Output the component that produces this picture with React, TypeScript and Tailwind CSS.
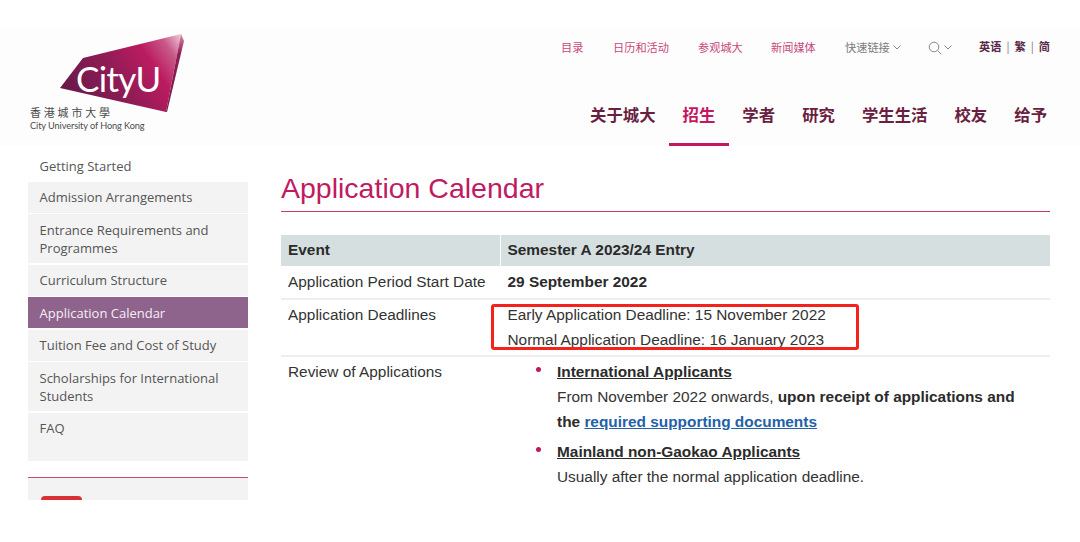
import React from "react";

const CJK = "font-['Noto_Sans_CJK_SC','Noto_Sans',sans-serif]";

function Logo() {
  return (
    <svg width="165" height="104" viewBox="0 0 165 104" className="block">
      <defs>
        <linearGradient id="lg" x1="35" y1="80" x2="152" y2="2" gradientUnits="userSpaceOnUse">
          <stop offset="0" stopColor="#5f1846" />
          <stop offset="0.45" stopColor="#8e1c55" />
          <stop offset="0.72" stopColor="#bb1b60" />
          <stop offset="0.88" stopColor="#c85a88" />
          <stop offset="1" stopColor="#eec6d6" />
        </linearGradient>
        <linearGradient id="lg2" x1="154" y1="0" x2="140" y2="78" gradientUnits="userSpaceOnUse">
          <stop offset="0" stopColor="#d98aa8" />
          <stop offset="0.25" stopColor="#8f1f55" />
          <stop offset="1" stopColor="#7a1a4c" />
        </linearGradient>
      </defs>
      <polygon points="31,54 54,24 152,0 137,78" fill="url(#lg)" />
      <polygon points="152,0 155,7 138,78 137,78" fill="url(#lg2)" />
      <text x="47" y="58" fontFamily="Lato, sans-serif" fontSize="35" fill="#ffffff" letterSpacing="-0.7">CityU</text>
      <text x="1" y="83" fontFamily="'Noto Sans CJK TC', sans-serif" fontSize="11" fill="#4a4a4a" letterSpacing="2.8">香港城市大學</text>
      <text x="1" y="95" fontFamily="Lato, sans-serif" fontSize="9.2" fill="#4a4a4a" letterSpacing="-0.1">City University of Hong Kong</text>
    </svg>
  );
}

function Header() {
  const top = [
    ["目录", "w-[52px]"],
    ["日历和活动", "w-[85px]"],
    ["参观城大", "w-[73px]"],
    ["新闻媒体", "w-[74px]"],
  ];
  const main = ["关于城大", "招生", "学者", "研究", "学生生活", "校友", "给予"];
  return (
    <header className={`h-[118px] bg-[#fdfdfd] flex ${CJK}`}>
      <div className="pl-[29px] pt-[6px] w-[540px] shrink-0">
        <Logo />
      </div>
      <div className="flex-1 flex flex-col">
        <div className="h-[38px] flex items-center text-[11.200px] leading-none pl-[21px] pt-[1px]">
          {top.map(([t, w]) => (
            <span key={t} className={`${w} text-[#c8487c] shrink-0`}>{t}</span>
          ))}
          <span className="text-[#7b7b7b] flex items-center w-[83px] shrink-0">
            快速链接
            <svg width="8" height="5" viewBox="0 0 8 5" className="ml-[3px]" fill="none" stroke="#888" strokeWidth="1"><path d="M.5.5 4 4 7.500.5" /></svg>
          </span>
          <span className="flex items-center w-[51px] shrink-0">
            <svg width="14" height="14" viewBox="0 0 14 14" fill="none" stroke="#8a8a8a" strokeWidth="1"><circle cx="6" cy="6" r="4.800" /><path d="M9.500 9.500 13.300 13.300" /></svg>
            <svg width="8" height="5" viewBox="0 0 8 5" className="ml-[2px]" fill="none" stroke="#888" strokeWidth="1"><path d="M.5.5 4 4 7.500.5" /></svg>
          </span>
          <span className="flex items-center text-[#5b2a48] font-bold -mt-[2px]">
            英语<span className="mx-[5px] font-normal text-[#777]">|</span>繁<span className="mx-[5px] font-normal text-[#777]">|</span>简
          </span>
        </div>
        <nav className="flex-1 flex pl-[36.500px]">
          {main.map((t) => {
            const active = t === "招生";
            return (
              <div
                key={t}
                className={`px-[13.500px] h-full flex items-center pt-[19px] text-[16.400px] font-bold whitespace-nowrap border-b-[3px] ${
                  active ? "text-[#c4175f] border-[#c4175f]" : "text-[#6a1f41] border-transparent"
                }`}
              >
                {t}
              </div>
            );
          })}
        </nav>
      </div>
    </header>
  );
}

function Sidebar() {
  const items = [
    "Admission Arrangements",
    "Entrance Requirements and Programmes",
    "Curriculum Structure",
    "Application Calendar",
    "Tuition Fee and Cost of Study",
    "Scholarships for International Students",
  ];
  return (
    <aside className="w-[220px] shrink-0 font-['Open_Sans',sans-serif] text-[13px] leading-[18px] text-[#555555]">
      <div className="h-[35.800px] px-[11.500px] pt-[10.500px]">Getting Started</div>
      <div className="flex flex-col gap-[1.500px]">
        {items.map((t) => (
          <div
            key={t}
            className={`px-[11.500px] py-[6.500px] ${t === "Application Calendar" ? "bg-[#8e648c] text-[#f5eef5]" : "bg-[#f3f3f3]"}`}
          >
            {t}
          </div>
        ))}
        <div className="h-[48px] px-[11.500px] py-[6.500px] bg-[#f3f3f3]">FAQ</div>
      </div>
      <div className="mt-[16px] h-[23px] bg-[#f3f3f3] border-t border-[#c9477c] pl-[13px] pt-[18px] overflow-hidden">
        <div className="w-[41px] h-[8px] rounded-t-[4px] bg-[#d92f35]" />
      </div>
    </aside>
  );
}

function Content() {
  return (
    <main className="relative ml-[33px] w-[769px] font-['Liberation_Sans',Arial,sans-serif] text-[15.400px] leading-[25px] text-[#333333]">
      <h1 className="h-[39px] pt-[26px] box-content border-b border-[#c0396f] text-[28.500px] leading-[36px] text-[#bf1b62]">
        <span className="block -mt-[2px]">Application Calendar</span>
      </h1>
      <div className="mt-[23px] grid grid-cols-[220px_1fr]">
        <div className="h-[31px] bg-[#d5dfdf] border-r border-white px-[7px] pt-[2px] font-bold text-[#2b2b2b]">Event</div>
        <div className="h-[31px] bg-[#d5dfdf] pl-[6.500px] pr-[7px] pt-[2px] font-bold text-[#2b2b2b]">Semester A 2023/24 Entry</div>

        <div className="h-[34px] border-b-2 border-[#eeeeee] px-[7px] pt-[3px]">Application Period Start Date</div>
        <div className="h-[34px] border-b-2 border-[#eeeeee] pl-[6.500px] pr-[7px] pt-[3px] font-bold text-[#2b2b2b]">29 September 2022</div>

        <div className="h-[57px] border-b-2 border-[#eeeeee] px-[7px] pt-[2px]">Application Deadlines</div>
        <div className="h-[57px] border-b-2 border-[#eeeeee] pl-[6.500px] pr-[7px] pt-[2px]">
          <div>Early Application Deadline: 15 November 2022</div>
          <div>Normal Application Deadline: 16 January 2023</div>
        </div>

        <div className="px-[7px] pt-[2px]">Review of Applications</div>
        <div className="pt-[2px] pl-[56px]">
          <div className="relative">
            <span className="absolute -left-[21px] top-[8px] w-[5px] h-[5px] rounded-full bg-[#c4175f]" />
            <div className="font-bold underline text-[#2b2b2b]">International Applicants</div>
            <div>From November 2022 onwards, <b className="text-[#2b2b2b]">upon receipt of applications and</b></div>
            <div className="font-bold text-[#2b2b2b]">the <a className="underline text-[#2361a8]">required supporting documents</a></div>
          </div>
          <div className="relative mt-[5px]">
            <span className="absolute -left-[21px] top-[8px] w-[5px] h-[5px] rounded-full bg-[#c4175f]" />
            <div className="font-bold underline text-[#2b2b2b]">Mainland non-Gaokao Applicants</div>
            <div>Usually after the normal application deadline.</div>
          </div>
        </div>
      </div>
      <div className="absolute left-[210px] top-[158px] w-[368px] h-[46px] border-[3px] border-[#f5211d] rounded-[3px]" />
    </main>
  );
}

export default function App() {
  return (
    <div className="w-[1080px] h-[542px] bg-white overflow-hidden pt-[28px]">
      <Header />
      <div className="flex pl-[28px] h-[354px] overflow-hidden">
        <Sidebar />
        <Content />
      </div>
    </div>
  );
}
